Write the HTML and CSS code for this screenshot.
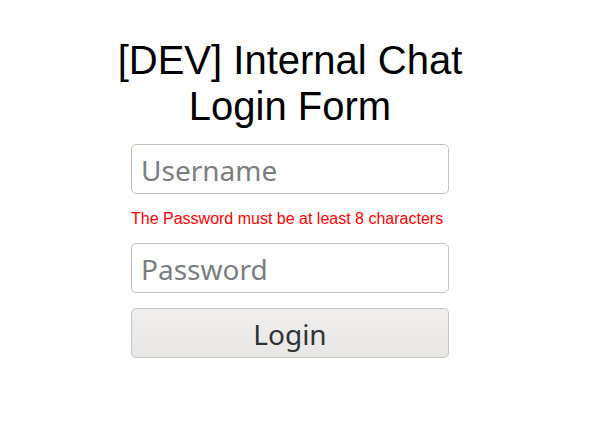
FILE: index.html
```html
<!DOCTYPE html>
<html>
<head>
<meta charset="utf-8">
<link rel="stylesheet" href="styles.css">
</head>
<body>
<div class="page">
  <h1 class="title">[DEV] Internal Chat<br>Login Form</h1>
  <form class="form">
    <input class="field" type="text" placeholder="Username">
    <div class="error">The Password must be at least 8 characters</div>
    <input class="field" type="password" placeholder="Password">
    <button class="btn" type="button">Login</button>
  </form>
</div>
</body>
</html>
```

FILE: styles.css
```css
html, body {
  background: #ffffff;
}
body {
  margin: 8px;
}
.page {
  width: 564px;
  display: flex;
  flex-direction: column;
  align-items: center;
}
.title {
  font-family: "Liberation Sans", Arial, sans-serif;
  font-weight: normal;
  font-size: 40px;
  line-height: 46px;
  text-align: center;
  color: #000;
  margin: 29px 0 0 0;
}
.form {
  display: flex;
  flex-direction: column;
  width: 318px;
  margin-top: 15px;
}
.field {
  box-sizing: border-box;
  width: 318px;
  height: 50px;
  border: 1px solid #c6c3bf;
  border-radius: 5px;
  background: #fff;
  font-family: "Noto Sans", sans-serif;
  font-size: 28px;
  padding: 2px 9px 0 9px;
  color: #2e3436;
  outline: none;
}
.field::placeholder {
  color: #7b7e80;
}
.error {
  font-family: "Liberation Sans", Arial, sans-serif;
  font-size: 16px;
  color: #ff0000;
  margin: 15px 0 14px 0;
  line-height: 20px;
}
.btn {
  box-sizing: border-box;
  width: 318px;
  height: 50px;
  margin-top: 15px;
  border: 1px solid #c9c6c2;
  border-radius: 5px;
  background: linear-gradient(#f0efee, #e9e7e5);
  font-family: "Noto Sans", sans-serif;
  font-size: 28px;
  color: #2e3436;
  padding: 2px 0 0 0;
}
```
